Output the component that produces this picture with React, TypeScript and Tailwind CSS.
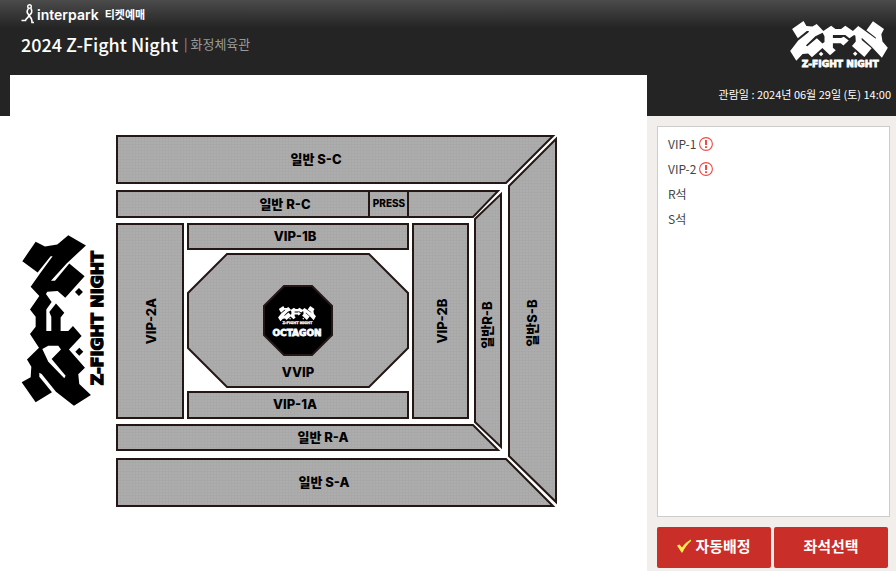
import React from 'react';

interface Section {
  id: string;
  points: string;
  label: string;
  x: number;
  y: number;
  size?: number;
  vertical?: boolean;
}

const sections: Section[] = [
  { id: 'sc', points: '117,136 553,136 506,183 117,183', label: '일반 S-C', x: 316, y: 164 },
  { id: 'sb', points: '556,139 556,502 509,456 509,186', label: '일반S-B', x: 537, y: 323, vertical: true },
  { id: 'sa', points: '117,459 506,459 553,506 117,506', label: '일반 S-A', x: 324, y: 487 },
  { id: 'rc', points: '117,191 498,191 473,217 117,217', label: '일반 R-C', x: 285, y: 209 },
  { id: 'rb', points: '501,194 501,447 475,422 475,219', label: '일반R-B', x: 492, y: 325, vertical: true },
  { id: 'ra', points: '117,425 473,425 498,450 117,450', label: '일반 R-A', x: 323, y: 442 },
  { id: 'press', points: '369,191 408,191 408,217 369,217', label: 'PRESS', x: 389, y: 207, size: 10 },
  { id: 'vip2a', points: '117,224 183,224 183,418 117,418', label: 'VIP-2A', x: 156, y: 321, vertical: true },
  { id: 'vip2b', points: '413,224 468,224 468,418 413,418', label: 'VIP-2B', x: 447, y: 321, vertical: true },
  { id: 'vip1b', points: '188,224 408,224 408,249 188,249', label: 'VIP-1B', x: 295, y: 241 },
  { id: 'vip1a', points: '188,392 408,392 408,418 188,418', label: 'VIP-1A', x: 295, y: 409 },
  {
    id: 'vvip',
    points: '227,254 369,254 408,293 408,348 369,387 227,387 188,348 188,293',
    label: 'VVIP',
    x: 298,
    y: 377,
  },
];

const grades = [
  { name: 'VIP-1', notice: true },
  { name: 'VIP-2', notice: true },
  { name: 'R석', notice: false },
  { name: 'S석', notice: false },
];

// Drawn upright in a 514 x 244 box
const LogoShape = () => (
  <g fill="currentColor">
    <g transform="translate(558 -66) rotate(90)">
      <path
        fillRule="evenodd"
        d="M107 65 L135 79 L172 73 L205 45 L258 76 L200 130 L153 182 L165 182 L208 130 L254 168 L196 233 L173 213 L142 215 L138 222
        L155 246 L139 268 L139 333 L154 333 L154 290 L148 276 L168 250 L193 278 L182 292 L182 333 L205 333 L219 318 L245 348 L207 388
        L255 443 L235 463 L238 492 L273 525 L222 557 L168 515 L125 462 L118 458 L118 470 L156 517 L107 547 L65 487 L92 472 L94 440
        L81 418 L117 383 L90 342 L107 320 L107 290 L90 268 L118 228 L92 200 L120 160 L158 108 L152 108 L113 157 L67 123 Z
        M127 387 L145 377 L175 377 L183 388 L155 417 L197 467 L193 475 L145 425 Z"
      />
      <path d="M237 204 L249 216 L237 228 L225 216 Z M238 383 L250 395 L238 407 L226 395 Z" />
    </g>
    <text
      x="62"
      y="242"
      fontFamily="'DejaVu Sans', sans-serif"
      fontWeight="700"
      fontSize="48"
      stroke="currentColor"
      strokeWidth="4"
    >
      Z-FIGHT NIGHT
    </text>
  </g>
);

const SeatMap = () => (
  <svg viewBox="10 75 637 496" className="block w-full" role="img" aria-label="2024 Z-Fight Night">
    <defs>
      <pattern id="grain" width="3" height="3" patternUnits="userSpaceOnUse">
        <rect width="3" height="3" fill="#aeadad" />
        <path d="M0.5 0V3M0 0.5H3" stroke="#a9a8a8" strokeWidth="1" />
      </pattern>
    </defs>
    {sections.map((s) => (
      <g key={s.id}>
        <polygon points={s.points} fill="url(#grain)" stroke="#231815" strokeWidth="2" />
        <text
          x={s.x}
          y={s.y}
          fontSize={s.size ?? 13}
          fontWeight="800"
          textAnchor="middle"
          fontFamily="Inter, 'Noto Sans CJK KR', sans-serif"
          transform={s.vertical ? `rotate(-90 ${s.x} ${s.y})` : undefined}
        >
          {s.label}
        </text>
      </g>
    ))}
    <polygon
      points="284,286 312,286 332,306 332,335 312,355 284,355 264,335 264,306"
      fill="#000"
      stroke="#231815"
      strokeWidth="2"
    />
    <g className="text-white" transform="translate(278 306) scale(0.074)">
      <LogoShape />
    </g>
    <text
      x="297"
      y="336"
      fill="#fff"
      stroke="#fff"
      strokeWidth="0.8"
      fontSize="9"
      fontWeight="900"
      textAnchor="middle"
      fontFamily="'DejaVu Sans', sans-serif"
    >
      OCTAGON
    </text>
    <g className="text-black" transform="translate(22 406) rotate(-90) scale(0.333)">
      <LogoShape />
    </g>
  </svg>
);

const NoticeIcon = () => (
  <svg viewBox="0 0 14 14" className="h-[14px] w-[14px]" aria-hidden="true">
    <circle cx="7" cy="7" r="6.4" fill="none" stroke="#ef4b45" strokeWidth="1.1" />
    <path d="M7 3V8M7 9.2V11" stroke="#ef4b45" strokeWidth="2" />
  </svg>
);

const App: React.FC = () => {
  return (
    <div className="flex min-h-screen bg-[linear-gradient(#4b4b4b,#242424_28px,#242424_116px,#fff_116px)] font-['Noto_Sans_CJK_KR',sans-serif]">
      <main className="flex min-w-0 flex-1 flex-col">
        <header className="h-[75px] pl-[21px] pt-[4px] text-white">
          <a href="#" className="flex h-5 items-center gap-[3px]">
            <svg viewBox="0 0 13 20" className="h-5 w-[13px]" fill="none" stroke="#fff" aria-hidden="true">
              <circle cx="8.5" cy="2.5" r="1.8" strokeWidth="1.4" />
              <path d="M7.500 4.500C5 7.500 6 9 7.500 10.500C9.500 13 4.500 14 4.500 16.500H0.500M10 4.500C12 8 10 9.500 8 12C10.500 13.500 11 16 11 18.500H13" strokeWidth="1.6" />
            </svg>
            <span className="font-['Inter',sans-serif] text-[14px] font-semibold">interpark</span>
            <span className="ml-[3px] text-[11px] font-bold">티켓예매</span>
          </a>
          <div className="flex h-10 items-center">
            <h1 className="text-[18px] font-medium">2024 Z-Fight Night</h1>
            <span className="ml-[6px] text-[13px] text-[#999]">| 화정체육관</span>
          </div>
        </header>
        <div className="ml-[10px] flex-1 bg-white">
          <SeatMap />
        </div>
      </main>

      <aside className="flex w-[249px] shrink-0 flex-col">
        <div className="flex h-[116px] flex-col items-end justify-between pb-[13px] pt-[21px] text-white">
          <svg viewBox="0 0 514 250" className="mr-2 h-12 w-[98px]" role="img" aria-label="ZFN">
            <LogoShape />
          </svg>
          <p className="mr-[5px] text-[11px] leading-[18px]">관람일 : 2024년 06월 29일 (토) 14:00</p>
        </div>
        <div className="flex flex-1 flex-col gap-[10px] bg-[#f1eeeb] pb-[3px] pl-[10px] pr-[6px] pt-[10px]">
          <ul className="flex-1 border border-[#ccc] bg-white px-[10px] pt-1 text-[12px] text-[#444]">
            {grades.map((grade) => (
              <li key={grade.name} className="flex h-[25px] items-center gap-[3px]">
                {grade.name}
                {grade.notice && <NoticeIcon />}
              </li>
            ))}
          </ul>
          <div className="mr-[2px] flex gap-[3px] text-[15px] font-bold text-white">
            <button className="flex h-[41px] flex-1 items-center justify-center gap-1 rounded-xs bg-[#ca2e28] pb-[3px]">
              <svg viewBox="0 0 14 14" className="h-[14px] w-[14px]" fill="#ffec4f" aria-hidden="true">
                <path d="M0 6.500L2.500 5.500L5 8.500C7.500 5 10.500 2 14 0.500L14 2C10.500 5 7.500 9 5.500 13.500H4.500Z" />
              </svg>
              자동배정
            </button>
            <button className="h-[41px] flex-1 rounded-xs bg-[#ca2e28] pb-[3px]">좌석선택</button>
          </div>
        </div>
      </aside>
    </div>
  );
};

export default App;
